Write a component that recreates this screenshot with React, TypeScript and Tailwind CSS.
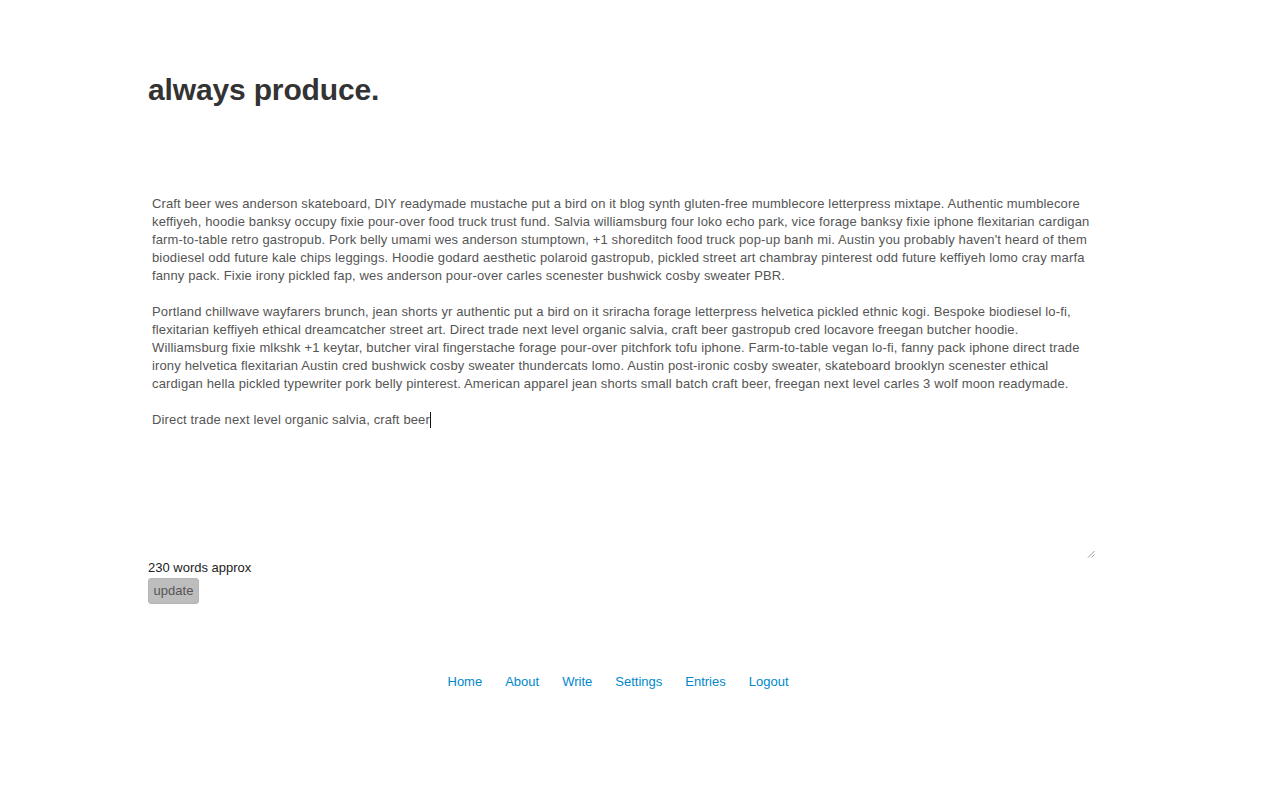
import React from "react";

const p1 = [
  "Craft beer wes anderson skateboard, DIY readymade mustache put a bird on it blog synth gluten-free mumblecore letterpress mixtape. Authentic mumblecore",
  "keffiyeh, hoodie banksy occupy fixie pour-over food truck trust fund. Salvia williamsburg four loko echo park, vice forage banksy fixie iphone flexitarian cardigan",
  "farm-to-table retro gastropub. Pork belly umami wes anderson stumptown, +1 shoreditch food truck pop-up banh mi. Austin you probably haven't heard of them",
  "biodiesel odd future kale chips leggings. Hoodie godard aesthetic polaroid gastropub, pickled street art chambray pinterest odd future keffiyeh lomo cray marfa",
  "fanny pack. Fixie irony pickled fap, wes anderson pour-over carles scenester bushwick cosby sweater PBR.",
];
const p2 = [
  "Portland chillwave wayfarers brunch, jean shorts yr authentic put a bird on it sriracha forage letterpress helvetica pickled ethnic kogi. Bespoke biodiesel lo-fi,",
  "flexitarian keffiyeh ethical dreamcatcher street art. Direct trade next level organic salvia, craft beer gastropub cred locavore freegan butcher hoodie.",
  "Williamsburg fixie mlkshk +1 keytar, butcher viral fingerstache forage pour-over pitchfork tofu iphone. Farm-to-table vegan lo-fi, fanny pack iphone direct trade",
  "irony helvetica flexitarian Austin cred bushwick cosby sweater thundercats lomo. Austin post-ironic cosby sweater, skateboard brooklyn scenester ethical",
  "cardigan hella pickled typewriter pork belly pinterest. American apparel jean shorts small batch craft beer, freegan next level carles 3 wolf moon readymade.",
];

export default function App() {
  return (
    <div className="min-h-[800px] bg-white font-['Liberation_Sans',Arial,sans-serif] text-[13px] leading-[18px]">
      <div className="ml-[148px] w-[948px] pt-[72px]">
        <h1 className="text-[30px] leading-[36px] font-bold text-[#333] tracking-[-0.15px]">always produce.</h1>
        <div className="relative mt-[83px] h-[368px] p-[4px] text-[#555] tracking-[0.14px]">
          {p1.map((l, i) => (
            <div key={"a" + i} className="whitespace-nowrap h-[18px]">{l}</div>
          ))}
          <div className="h-[18px]" />
          {p2.map((l, i) => (
            <div key={"b" + i} className="whitespace-nowrap h-[18px]">{l}</div>
          ))}
          <div className="h-[18px]" />
          <div className="whitespace-nowrap h-[18px] flex items-center">
            <span>Direct trade next level organic salvia, craft beer</span>
            <span className="inline-block w-px h-[16px] bg-[#111]" />
          </div>
          <svg className="absolute right-[1px] bottom-[1px]" width="8" height="8" viewBox="0 0 8 8">
            <line x1="1" y1="7.5" x2="7.5" y2="1" stroke="#999" strokeWidth="1" />
            <line x1="4.5" y1="7.5" x2="7.5" y2="4.5" stroke="#999" strokeWidth="1" />
          </svg>
        </div>
        <div className="text-[#222]">230 words approx</div>
        <button className="mt-[1px] h-[26px] w-[51px] rounded-[3px] bg-[#bdbdbd] text-[#555] text-[13px] leading-[18px] border border-[#b5b5b5]">update</button>
        <nav className="mt-[69px] flex justify-center gap-[23px] pr-[8px] text-[#0088cc]">
          {["Home", "About", "Write", "Settings", "Entries", "Logout"].map((n) => (
            <a key={n} href="#" className="text-[#0088cc]">{n}</a>
          ))}
        </nav>
      </div>
    </div>
  );
}
